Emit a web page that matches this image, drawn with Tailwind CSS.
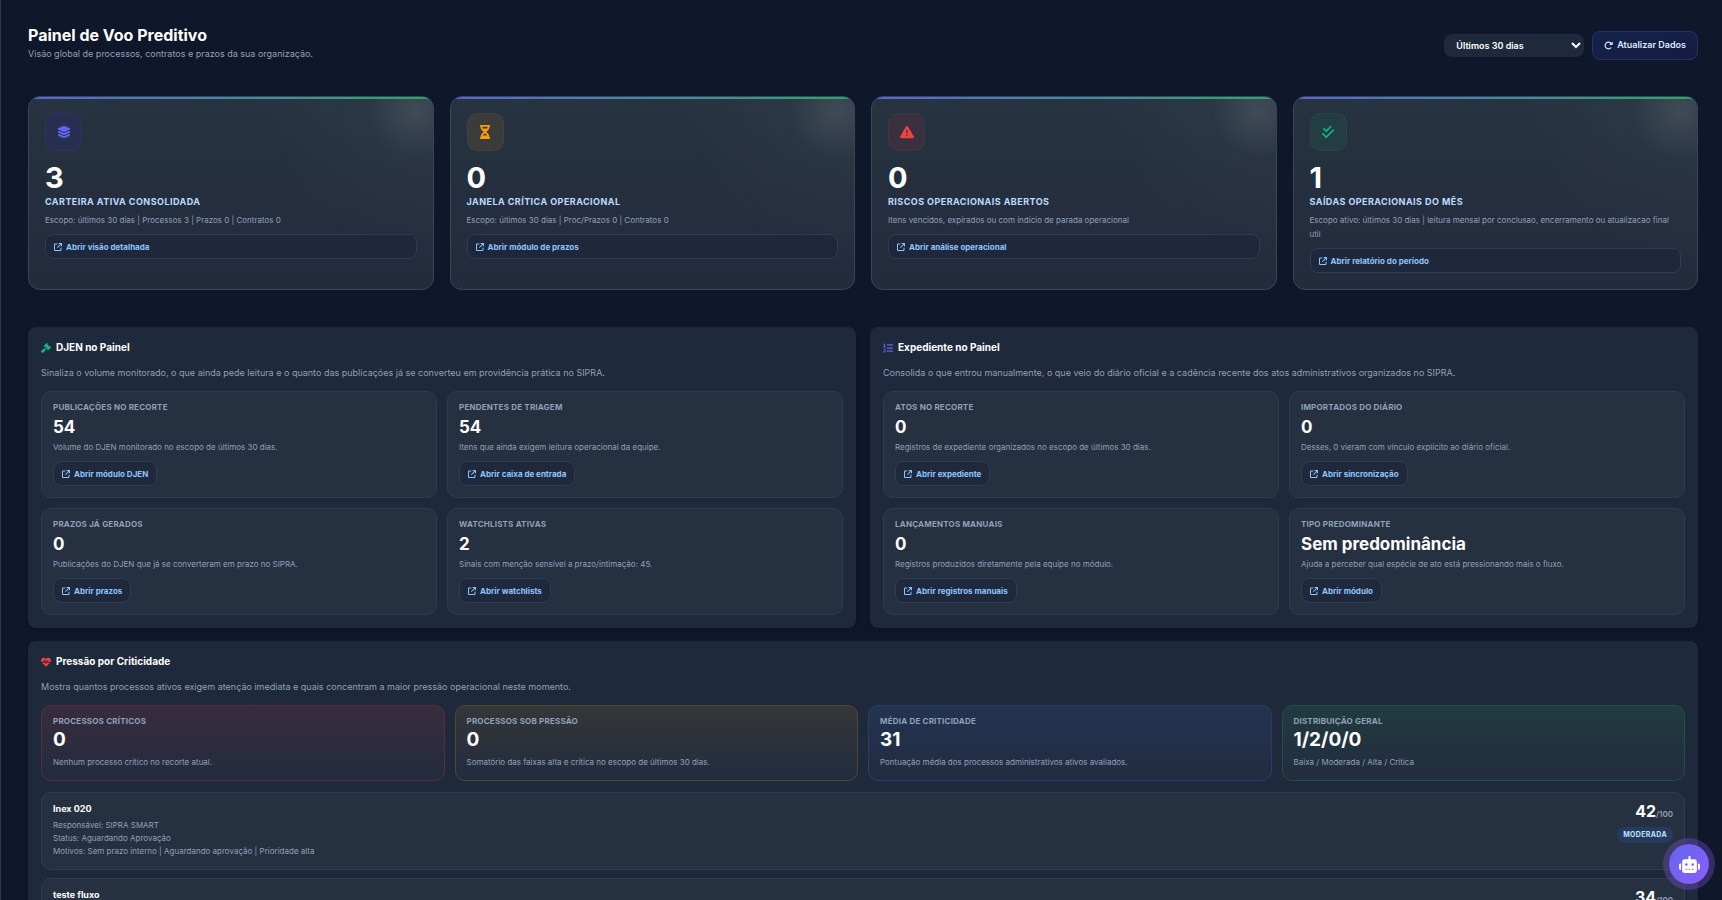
<!DOCTYPE html>
<html lang="pt-BR">
<head>
    <meta charset="UTF-8">
    <meta name="viewport" content="width=device-width, initial-scale=1.0">
    <title>Painel de Voo Preditivo</title>
    <script src="https://cdn.jsdelivr.net/npm/@tailwindcss/browser@4"></script>
</head>
<body class="bg-[#0f172a] font-['Inter',sans-serif] text-white">

    <!-- Icons -->
    <svg class="hidden" aria-hidden="true">
        <symbol id="i-layers" viewBox="0 0 576 512"><path d="M264.5 5.2c14.9-6.9 32.1-6.9 47 0l218.6 101c8.5 3.9 13.9 12.4 13.9 21.8s-5.4 17.9-13.9 21.8l-218.6 101c-14.9 6.9-32.1 6.9-47 0L45.9 149.8C37.4 145.8 32 137.3 32 128s5.4-17.9 13.9-21.8L264.5 5.2zM476.9 209.6l53.2 24.6c8.5 3.9 13.9 12.4 13.9 21.8s-5.4 17.9-13.9 21.8l-218.6 101c-14.9 6.9-32.1 6.9-47 0L45.9 277.8C37.4 273.8 32 265.3 32 256s5.4-17.9 13.9-21.8l53.2-24.6 152 70.2c23.4 10.8 50.4 10.8 73.8 0l152-70.2zm-152 198.2l152-70.2 53.2 24.6c8.5 3.9 13.9 12.4 13.9 21.8s-5.4 17.9-13.9 21.8l-218.6 101c-14.9 6.9-32.1 6.9-47 0L45.9 405.8C37.4 401.8 32 393.3 32 384s5.4-17.9 13.9-21.8l53.2-24.6 152 70.2c23.4 10.8 50.4 10.8 73.8 0z"/></symbol>
        <symbol id="i-hourglass" viewBox="0 0 384 512"><path d="M32 0C14.3 0 0 14.3 0 32S14.3 64 32 64V75c0 42.4 16.9 83.1 46.9 113.1L146.7 256 78.9 323.9C48.9 353.9 32 394.6 32 437v11c-17.7 0-32 14.3-32 32s14.3 32 32 32H352c17.7 0 32-14.3 32-32s-14.3-32-32-32V437c0-42.4-16.9-83.1-46.9-113.1L237.3 256l67.9-67.9c30-30 46.9-70.7 46.9-113.1V64c17.7 0 32-14.3 32-32s-14.3-32-32-32H32zM96 75V64H288V75c0 19-5.6 37.4-16 53H112c-10.3-15.6-16-34-16-53zm16 309c3.5-5.3 7.6-10.3 12.1-14.9L192 301.3l67.9 67.9c4.6 4.6 8.6 9.6 12.1 14.9H112z"/></symbol>
        <symbol id="i-warning" viewBox="0 0 512 512"><path d="M256 32c14.2 0 27.3 7.5 34.5 19.8l216 368c7.3 12.4 7.3 27.7 .2 40.1S486.3 480 472 480H40c-14.3 0-27.6-7.7-34.7-20.1s-7-27.8 .2-40.1l216-368C228.7 39.5 241.8 32 256 32zm0 128c-13.3 0-24 10.7-24 24V296c0 13.3 10.7 24 24 24s24-10.7 24-24V184c0-13.3-10.7-24-24-24zm32 224a32 32 0 1 0 -64 0 32 32 0 1 0 64 0z"/></symbol>
        <symbol id="i-checks" viewBox="0 0 448 512"><path d="M342.6 86.6c12.5-12.5 12.5-32.8 0-45.3s-32.8-12.5-45.3 0L160 178.7l-57.4-57.4c-12.5-12.5-32.8-12.5-45.3 0s-12.5 32.8 0 45.3l80 80c12.5 12.5 32.8 12.5 45.3 0l160-160zm96 128c12.5-12.5 12.5-32.8 0-45.3s-32.8-12.5-45.3 0L160 402.7 54.6 297.4c-12.5-12.5-32.8-12.5-45.3 0s-12.5 32.8 0 45.3l128 128c12.5 12.5 32.8 12.5 45.3 0l256-256z"/></symbol>
        <symbol id="i-open" viewBox="0 0 512 512"><path d="M320 0c-17.7 0-32 14.3-32 32s14.3 32 32 32h82.7L201.4 265.4c-12.5 12.5-12.5 32.8 0 45.3s32.8 12.5 45.3 0L448 109.3V192c0 17.7 14.3 32 32 32s32-14.3 32-32V32c0-17.7-14.3-32-32-32H320zM80 32C35.8 32 0 67.8 0 112V432c0 44.2 35.8 80 80 80H400c44.2 0 80-35.8 80-80V320c0-17.7-14.3-32-32-32s-32 14.3-32 32V432c0 8.8-7.2 16-16 16H80c-8.8 0-16-7.2-16-16V112c0-8.8 7.2-16 16-16H192c17.7 0 32-14.3 32-32s-14.3-32-32-32H80z"/></symbol>
        <symbol id="i-gavel" viewBox="0 0 512 512"><path d="M318.6 9.4c-12.5-12.5-32.8-12.5-45.3 0l-120 120c-12.5 12.5-12.5 32.8 0 45.3l16 16c12.5 12.5 32.8 12.5 45.3 0l4-4L325.4 293.4l-4 4c-12.5 12.5-12.5 32.8 0 45.3l16 16c12.5 12.5 32.8 12.5 45.3 0l120-120c12.5-12.5 12.5-32.8 0-45.3l-16-16c-12.5-12.5-32.8-12.5-45.3 0l-4 4L330.6 74.6l4-4c12.5-12.5 12.5-32.8 0-45.3l-16-16zm-152 288c-12.5-12.5-32.8-12.5-45.3 0l-112 112c-12.5 12.5-12.5 32.8 0 45.3l48 48c12.5 12.5 32.8 12.5 45.3 0l112-112c12.5-12.5 12.5-32.8 0-45.3l-1.4-1.4L272 285.3 226.7 240 168 298.7l-1.4-1.4z"/></symbol>
        <symbol id="i-list" viewBox="0 0 512 512"><path d="M224 96H480M224 256H480M224 416H480" fill="none" stroke="currentColor" stroke-width="64" stroke-linecap="round"/><path d="M48 56H80V200M40 200H120M32 344C56 296 120 304 120 350C120 380 80 410 32 456H120" fill="none" stroke="currentColor" stroke-width="48" stroke-linecap="round" stroke-linejoin="round"/></symbol>
        <symbol id="i-heart" viewBox="0 0 512 512"><path d="M228.3 469.1L47.6 300.4c-4.2-3.9-8.2-8.1-11.9-12.4h87c22.6 0 43-13.6 51.7-34.5l10.5-25.2 49.3 109.5c3.8 8.5 12.1 14 21.4 14.1s17.8-5 22-13.3L320 253.7l1.7 3.4c9.5 19 28.9 31 50.1 31H476.3c-3.7 4.3-7.7 8.5-11.9 12.4L283.7 469.1c-7.5 7-17.4 10.9-27.7 10.9s-20.2-3.9-27.7-10.9zM503.7 240h-132c-3 0-5.8-1.7-7.2-4.4l-23.2-46.3c-4.1-8.1-12.4-13.3-21.5-13.3s-17.4 5.1-21.5 13.3l-41.4 82.8L205.9 158.2c-3.9-8.7-12.7-14.3-22.2-14.1s-18.1 5.9-21.8 14.8l-31.8 76.3c-1.2 3-4.2 4.9-7.4 4.9H16c-2.6 0-5 .4-7.3 1.1C3 225.2 0 208.2 0 190.9v-5.8c0-69.9 50.5-129.5 119.4-141C165 36.5 211.4 51.4 244 84l12 12 12-12c32.6-32.6 79-47.5 124.6-39.9C461.5 55.6 512 115.2 512 185.1v5.8c0 16.9-2.8 33.5-8.3 49.1z"/></symbol>
        <symbol id="i-refresh" viewBox="0 0 512 512"><path d="M463.5 224H472c13.3 0 24-10.7 24-24V72c0-9.7-5.8-18.5-14.8-22.2s-19.3-1.7-26.2 5.2L413.4 96.6c-87.6-86.5-228.7-86.2-315.8 1c-87.5 87.5-87.5 229.3 0 316.8s229.3 87.5 316.8 0c12.5-12.5 12.5-32.8 0-45.3s-32.8-12.5-45.3 0c-62.5 62.5-163.8 62.5-226.3 0s-62.5-163.8 0-226.3c62.2-62.2 162.7-62.5 225.3-1L327 183c-6.9 6.9-8.9 17.2-5.2 26.2s12.5 14.8 22.2 14.8H463.5z"/></symbol>
        <symbol id="i-robot" viewBox="0 0 640 512"><path d="M320 0c17.7 0 32 14.3 32 32V96H472c39.8 0 72 32.2 72 72V440c0 39.8-32.2 72-72 72H168c-39.8 0-72-32.2-72-72V168c0-39.8 32.2-72 72-72H288V32c0-17.7 14.3-32 32-32zM208 384c-8.8 0-16 7.2-16 16s7.2 16 16 16h32c8.8 0 16-7.2 16-16s-7.2-16-16-16H208zm96 0c-8.8 0-16 7.2-16 16s7.2 16 16 16h32c8.8 0 16-7.2 16-16s-7.2-16-16-16H304zm96 0c-8.8 0-16 7.2-16 16s7.2 16 16 16h32c8.8 0 16-7.2 16-16s-7.2-16-16-16H400zM264 256a40 40 0 1 0 -80 0 40 40 0 1 0 80 0zm152 40a40 40 0 1 0 0-80 40 40 0 1 0 0 80zM48 224H64V416H48c-26.5 0-48-21.5-48-48V272c0-26.5 21.5-48 48-48zm544 0c26.5 0 48 21.5 48 48v96c0 26.5-21.5 48-48 48H576V224h16z"/></symbol>
    </svg>

    <main class="h-screen overflow-y-auto border-l border-[#2a3950] pt-[26px] pr-6 pb-6 pl-[27px] [scrollbar-width:none]">

        <!-- Header -->
        <header class="mb-8 flex items-center justify-between">
            <div>
                <h1 class="text-[16px] leading-[18px] font-bold">Painel de Voo Preditivo</h1>
                <p class="text-[9px] leading-[20px] text-slate-400">Visão global de processos, contratos e prazos da sua organização.</p>
            </div>
            <div class="flex items-center gap-2">
                <select aria-label="Período" class="h-[23px] w-[140px] rounded-lg bg-[#1e293b] pr-1 pl-2 text-[9px] font-semibold">
                    <option>Últimos 30 dias</option>
                    <option>Últimos 60 dias</option>
                    <option>Últimos 90 dias</option>
                </select>
                <button class="flex h-[29px] items-center gap-1 rounded-lg border border-[#273168] bg-linear-to-br from-[#12234a] to-[#171b41] px-[11px] text-[9px] font-semibold text-blue-100">
                    <svg class="size-[9px] fill-current"><use href="#i-refresh"/></svg>
                    Atualizar Dados
                </button>
            </div>
        </header>

        <!-- KPI cards -->
        <section class="mb-[37px] grid grid-cols-4 gap-4">
            <article class="relative overflow-hidden rounded-xl border border-[#39465a] bg-[radial-gradient(circle_at_calc(100%_-_18px)_15px,#ffffff17,transparent_46px),radial-gradient(circle_at_100%_0,#ffffff0a,transparent_170px),linear-gradient(#263340,#232b3d)] p-4">
                <div class="absolute inset-x-0 top-0 h-[2px] bg-linear-to-r from-[#5b5fd9] to-[#27a862]"></div>
                <div class="mb-3 flex h-[38px] w-[37px] items-center justify-center rounded-[10px] border border-white/3 bg-[#282e50] text-[#6366f1]">
                    <svg class="size-[14px] fill-current"><use href="#i-layers"/></svg>
                </div>
                <div class="text-[29px] leading-[29px] font-bold">3</div>
                <h2 class="mt-[3px] text-[9px] leading-[14px] font-bold tracking-wider text-blue-200 uppercase">Carteira ativa consolidada</h2>
                <p class="mt-1 mb-[7px] text-[8px] leading-[14px] text-slate-400">Escopo: últimos 30 dias | Processos 3 | Prazos 0 | Contratos 0</p>
                <a href="#" class="flex h-[25px] items-center gap-1 rounded-lg border border-[#2d3d54] bg-[#1f283b] px-2 text-[8px] font-bold text-blue-300"><svg class="size-2 fill-current"><use href="#i-open"/></svg>Abrir visão detalhada</a>
            </article>
            <article class="relative overflow-hidden rounded-xl border border-[#39465a] bg-[radial-gradient(circle_at_calc(100%_-_18px)_15px,#ffffff17,transparent_46px),radial-gradient(circle_at_100%_0,#ffffff0a,transparent_170px),linear-gradient(#263340,#232b3d)] p-4">
                <div class="absolute inset-x-0 top-0 h-[2px] bg-linear-to-r from-[#5b5fd9] to-[#27a862]"></div>
                <div class="mb-3 flex h-[38px] w-[37px] items-center justify-center rounded-[10px] border border-white/3 bg-[#3b3b39] text-[#f59e0b]">
                    <svg class="size-[14px] fill-current"><use href="#i-hourglass"/></svg>
                </div>
                <div class="text-[29px] leading-[29px] font-bold">0</div>
                <h2 class="mt-[3px] text-[9px] leading-[14px] font-bold tracking-wider text-blue-200 uppercase">Janela crítica operacional</h2>
                <p class="mt-1 mb-[7px] text-[8px] leading-[14px] text-slate-400">Escopo: últimos 30 dias | Proc/Prazos 0 | Contratos 0</p>
                <a href="#" class="flex h-[25px] items-center gap-1 rounded-lg border border-[#2d3d54] bg-[#1f283b] px-2 text-[8px] font-bold text-blue-300"><svg class="size-2 fill-current"><use href="#i-open"/></svg>Abrir módulo de prazos</a>
            </article>
            <article class="relative overflow-hidden rounded-xl border border-[#39465a] bg-[radial-gradient(circle_at_calc(100%_-_18px)_15px,#ffffff17,transparent_46px),radial-gradient(circle_at_100%_0,#ffffff0a,transparent_170px),linear-gradient(#263340,#232b3d)] p-4">
                <div class="absolute inset-x-0 top-0 h-[2px] bg-linear-to-r from-[#5b5fd9] to-[#27a862]"></div>
                <div class="mb-3 flex h-[38px] w-[37px] items-center justify-center rounded-[10px] border border-white/3 bg-[#3a303e] text-[#ef4444]">
                    <svg class="size-[14px] fill-current"><use href="#i-warning"/></svg>
                </div>
                <div class="text-[29px] leading-[29px] font-bold">0</div>
                <h2 class="mt-[3px] text-[9px] leading-[14px] font-bold tracking-wider text-blue-200 uppercase">Riscos operacionais abertos</h2>
                <p class="mt-1 mb-[7px] text-[8px] leading-[14px] text-slate-400">Itens vencidos, expirados ou com indício de parada operacional</p>
                <a href="#" class="flex h-[25px] items-center gap-1 rounded-lg border border-[#2d3d54] bg-[#1f283b] px-2 text-[8px] font-bold text-blue-300"><svg class="size-2 fill-current"><use href="#i-open"/></svg>Abrir análise operacional</a>
            </article>
            <article class="relative overflow-hidden rounded-xl border border-[#39465a] bg-[radial-gradient(circle_at_calc(100%_-_18px)_15px,#ffffff17,transparent_46px),radial-gradient(circle_at_100%_0,#ffffff0a,transparent_170px),linear-gradient(#263340,#232b3d)] p-4">
                <div class="absolute inset-x-0 top-0 h-[2px] bg-linear-to-r from-[#5b5fd9] to-[#27a862]"></div>
                <div class="mb-3 flex h-[38px] w-[37px] items-center justify-center rounded-[10px] border border-white/3 bg-[#243d42] text-[#10b981]">
                    <svg class="size-[14px] fill-current"><use href="#i-checks"/></svg>
                </div>
                <div class="text-[29px] leading-[29px] font-bold">1</div>
                <h2 class="mt-[3px] text-[9px] leading-[14px] font-bold tracking-wider text-blue-200 uppercase">Saídas operacionais do mês</h2>
                <p class="mt-1 mb-[7px] text-[8px] leading-[14px] text-slate-400">Escopo ativo: últimos 30 dias | leitura mensal por conclusao, encerramento ou atualizacao final util</p>
                <a href="#" class="flex h-[25px] items-center gap-1 rounded-lg border border-[#2d3d54] bg-[#1f283b] px-2 text-[8px] font-bold text-blue-300"><svg class="size-2 fill-current"><use href="#i-open"/></svg>Abrir relatório do período</a>
            </article>
        </section>

        <!-- DJEN / Expediente -->
        <section class="mb-[13px] grid grid-cols-2 gap-[14px]">
            <div class="rounded-lg bg-[#1e293b] p-[13px] shadow-md">
                <h2 class="flex items-center gap-[5px] text-[10px] leading-[15px] font-bold"><svg class="size-[10px] fill-current text-[#10b981]"><use href="#i-gavel"/></svg>DJEN no Painel</h2>
                <p class="my-[11px] text-[9px] leading-[14px] text-slate-400">Sinaliza o volume monitorado, o que ainda pede leitura e o quanto das publicações já se converteu em providência prática no SIPRA.</p>
                <div class="grid grid-cols-2 gap-[10px]">
                    <div class="rounded-[10px] border border-[#303c4e] bg-[#253040] p-[11px]">
                        <h3 class="text-[8px] leading-[9px] font-bold tracking-wide text-slate-400 uppercase">Publicações no recorte</h3>
                        <div class="mt-1 text-[17px] leading-[22px] font-bold">54</div>
                        <p class="mt-[3px] mb-[7px] text-[8px] leading-[13px] text-slate-400">Volume do DJEN monitorado no escopo de últimos 30 dias.</p>
                        <a href="#" class="flex h-[25px] w-fit items-center gap-1 rounded-lg border border-[#2d3d57] bg-[#1f293b] px-2 text-[8px] font-bold text-blue-300"><svg class="size-2 fill-current"><use href="#i-open"/></svg>Abrir módulo DJEN</a>
                    </div>
                    <div class="rounded-[10px] border border-[#303c4e] bg-[#253040] p-[11px]">
                        <h3 class="text-[8px] leading-[9px] font-bold tracking-wide text-slate-400 uppercase">Pendentes de triagem</h3>
                        <div class="mt-1 text-[17px] leading-[22px] font-bold">54</div>
                        <p class="mt-[3px] mb-[7px] text-[8px] leading-[13px] text-slate-400">Itens que ainda exigem leitura operacional da equipe.</p>
                        <a href="#" class="flex h-[25px] w-fit items-center gap-1 rounded-lg border border-[#2d3d57] bg-[#1f293b] px-2 text-[8px] font-bold text-blue-300"><svg class="size-2 fill-current"><use href="#i-open"/></svg>Abrir caixa de entrada</a>
                    </div>
                    <div class="rounded-[10px] border border-[#303c4e] bg-[#253040] p-[11px]">
                        <h3 class="text-[8px] leading-[9px] font-bold tracking-wide text-slate-400 uppercase">Prazos já gerados</h3>
                        <div class="mt-1 text-[17px] leading-[22px] font-bold">0</div>
                        <p class="mt-[3px] mb-[7px] text-[8px] leading-[13px] text-slate-400">Publicações do DJEN que já se converteram em prazo no SIPRA.</p>
                        <a href="#" class="flex h-[25px] w-fit items-center gap-1 rounded-lg border border-[#2d3d57] bg-[#1f293b] px-2 text-[8px] font-bold text-blue-300"><svg class="size-2 fill-current"><use href="#i-open"/></svg>Abrir prazos</a>
                    </div>
                    <div class="rounded-[10px] border border-[#303c4e] bg-[#253040] p-[11px]">
                        <h3 class="text-[8px] leading-[9px] font-bold tracking-wide text-slate-400 uppercase">Watchlists ativas</h3>
                        <div class="mt-1 text-[17px] leading-[22px] font-bold">2</div>
                        <p class="mt-[3px] mb-[7px] text-[8px] leading-[13px] text-slate-400">Sinais com menção sensível a prazo/intimação: 45.</p>
                        <a href="#" class="flex h-[25px] w-fit items-center gap-1 rounded-lg border border-[#2d3d57] bg-[#1f293b] px-2 text-[8px] font-bold text-blue-300"><svg class="size-2 fill-current"><use href="#i-open"/></svg>Abrir watchlists</a>
                    </div>
                </div>
            </div>
            <div class="rounded-lg bg-[#1e293b] p-[13px] shadow-md">
                <h2 class="flex items-center gap-[5px] text-[10px] leading-[15px] font-bold"><svg class="size-[10px] fill-current text-[#6366f1]"><use href="#i-list"/></svg>Expediente no Painel</h2>
                <p class="my-[11px] text-[9px] leading-[14px] text-slate-400">Consolida o que entrou manualmente, o que veio do diário oficial e a cadência recente dos atos administrativos organizados no SIPRA.</p>
                <div class="grid grid-cols-2 gap-[10px]">
                    <div class="rounded-[10px] border border-[#303c4e] bg-[#253040] p-[11px]">
                        <h3 class="text-[8px] leading-[9px] font-bold tracking-wide text-slate-400 uppercase">Atos no recorte</h3>
                        <div class="mt-1 text-[17px] leading-[22px] font-bold">0</div>
                        <p class="mt-[3px] mb-[7px] text-[8px] leading-[13px] text-slate-400">Registros de expediente organizados no escopo de últimos 30 dias.</p>
                        <a href="#" class="flex h-[25px] w-fit items-center gap-1 rounded-lg border border-[#2d3d57] bg-[#1f293b] px-2 text-[8px] font-bold text-blue-300"><svg class="size-2 fill-current"><use href="#i-open"/></svg>Abrir expediente</a>
                    </div>
                    <div class="rounded-[10px] border border-[#303c4e] bg-[#253040] p-[11px]">
                        <h3 class="text-[8px] leading-[9px] font-bold tracking-wide text-slate-400 uppercase">Importados do diário</h3>
                        <div class="mt-1 text-[17px] leading-[22px] font-bold">0</div>
                        <p class="mt-[3px] mb-[7px] text-[8px] leading-[13px] text-slate-400">Desses, 0 vieram com vínculo explícito ao diário oficial.</p>
                        <a href="#" class="flex h-[25px] w-fit items-center gap-1 rounded-lg border border-[#2d3d57] bg-[#1f293b] px-2 text-[8px] font-bold text-blue-300"><svg class="size-2 fill-current"><use href="#i-open"/></svg>Abrir sincronização</a>
                    </div>
                    <div class="rounded-[10px] border border-[#303c4e] bg-[#253040] p-[11px]">
                        <h3 class="text-[8px] leading-[9px] font-bold tracking-wide text-slate-400 uppercase">Lançamentos manuais</h3>
                        <div class="mt-1 text-[17px] leading-[22px] font-bold">0</div>
                        <p class="mt-[3px] mb-[7px] text-[8px] leading-[13px] text-slate-400">Registros produzidos diretamente pela equipe no módulo.</p>
                        <a href="#" class="flex h-[25px] w-fit items-center gap-1 rounded-lg border border-[#2d3d57] bg-[#1f293b] px-2 text-[8px] font-bold text-blue-300"><svg class="size-2 fill-current"><use href="#i-open"/></svg>Abrir registros manuais</a>
                    </div>
                    <div class="rounded-[10px] border border-[#303c4e] bg-[#253040] p-[11px]">
                        <h3 class="text-[8px] leading-[9px] font-bold tracking-wide text-slate-400 uppercase">Tipo predominante</h3>
                        <div class="mt-1 text-[17px] leading-[22px] font-bold">Sem predominância</div>
                        <p class="mt-[3px] mb-[7px] text-[8px] leading-[13px] text-slate-400">Ajuda a perceber qual espécie de ato está pressionando mais o fluxo.</p>
                        <a href="#" class="flex h-[25px] w-fit items-center gap-1 rounded-lg border border-[#2d3d57] bg-[#1f293b] px-2 text-[8px] font-bold text-blue-300"><svg class="size-2 fill-current"><use href="#i-open"/></svg>Abrir módulo</a>
                    </div>
                </div>
            </div>
        </section>

        <!-- Criticidade -->
        <section class="rounded-lg bg-[#1e293b] p-[13px] shadow-md">
            <h2 class="flex items-center gap-[5px] text-[10px] leading-[15px] font-bold"><svg class="size-[10px] fill-current text-[#ef4444]"><use href="#i-heart"/></svg>Pressão por Criticidade</h2>
            <p class="my-[11px] text-[9px] leading-[14px] text-slate-400">Mostra quantos processos ativos exigem atenção imediata e quais concentram a maior pressão operacional neste momento.</p>
            <div class="mb-[11px] grid grid-cols-4 gap-[10px]">
                <div class="rounded-[10px] border border-[#552f40] bg-linear-to-b from-[#372c3d] to-[#222c3f] p-[11px]">
                    <h3 class="text-[8px] leading-[9px] font-bold tracking-wide text-slate-400 uppercase">Processos críticos</h3>
                    <div class="mt-[3px] text-[19px] leading-[22px] font-bold">0</div>
                    <p class="mt-[5px] text-[8px] leading-[13px] text-slate-400">Nenhum processo crítico no recorte atual.</p>
                </div>
                <div class="rounded-[10px] border border-[#514536] bg-linear-to-b from-[#353637] to-[#222c3f] p-[11px]">
                    <h3 class="text-[8px] leading-[9px] font-bold tracking-wide text-slate-400 uppercase">Processos sob pressão</h3>
                    <div class="mt-[3px] text-[19px] leading-[22px] font-bold">0</div>
                    <p class="mt-[5px] text-[8px] leading-[13px] text-slate-400">Somatório das faixas alta e crítica no escopo de últimos 30 dias.</p>
                </div>
                <div class="rounded-[10px] border border-[#263f66] bg-linear-to-b from-[#223351] to-[#222c3f] p-[11px]">
                    <h3 class="text-[8px] leading-[9px] font-bold tracking-wide text-slate-400 uppercase">Média de criticidade</h3>
                    <div class="mt-[3px] text-[19px] leading-[22px] font-bold">31</div>
                    <p class="mt-[5px] text-[8px] leading-[13px] text-slate-400">Pontuação média dos processos administrativos ativos avaliados.</p>
                </div>
                <div class="rounded-[10px] border border-[#205046] bg-linear-to-b from-[#203b3f] to-[#222c3f] p-[11px]">
                    <h3 class="text-[8px] leading-[9px] font-bold tracking-wide text-slate-400 uppercase">Distribuição geral</h3>
                    <div class="mt-[3px] text-[19px] leading-[22px] font-bold">1/2/0/0</div>
                    <p class="mt-[5px] text-[8px] leading-[13px] text-slate-400">Baixa / Moderada / Alta / Crítica</p>
                </div>
            </div>
            <div class="flex flex-col gap-2">
                <div class="flex min-h-[78px] justify-between rounded-[10px] border border-[#303c4e] bg-[#253040] p-[11px]">
                    <div class="text-[8px] leading-[13px] text-slate-400">
                        <h3 class="mb-[5px] text-[9px] leading-[10px] font-bold text-white">Inex 020</h3>
                        <p>Responsável: SIPRA SMART</p>
                        <p>Status: Aguardando Aprovação</p>
                        <p>Motivos: Sem prazo interno | Aguardando aprovação | Prioridade alta</p>
                    </div>
                    <div class="flex flex-col items-end">
                        <div class="text-[16px] leading-[14px] font-bold">42<span class="text-[8px] font-semibold text-slate-400">/100</span></div>
                        <span class="mt-[6px] flex h-4 items-center rounded-full bg-[#263a5c] px-[6px] text-[7px] font-bold tracking-wider text-[#bfe3fd]">MODERADA</span>
                    </div>
                </div>
                <div class="flex min-h-[78px] justify-between rounded-[10px] border border-[#303c4e] bg-[#253040] p-[11px]">
                    <h3 class="text-[9px] leading-[10px] font-bold">teste fluxo</h3>
                    <div class="text-[16px] leading-[14px] font-bold">34<span class="text-[8px] font-semibold text-slate-400">/100</span></div>
                </div>
            </div>
        </section>
    </main>

    <!-- Assistant -->
    <button aria-label="Assistente" class="fixed right-[13px] bottom-4 flex size-10 items-center justify-center rounded-full bg-linear-to-br from-[#6366f1] to-[#8b5cf6] text-white ring-6 ring-[#8b5cf6]/30">
        <svg class="h-[17px] w-[21px] fill-current"><use href="#i-robot"/></svg>
    </button>

</body>
</html>
